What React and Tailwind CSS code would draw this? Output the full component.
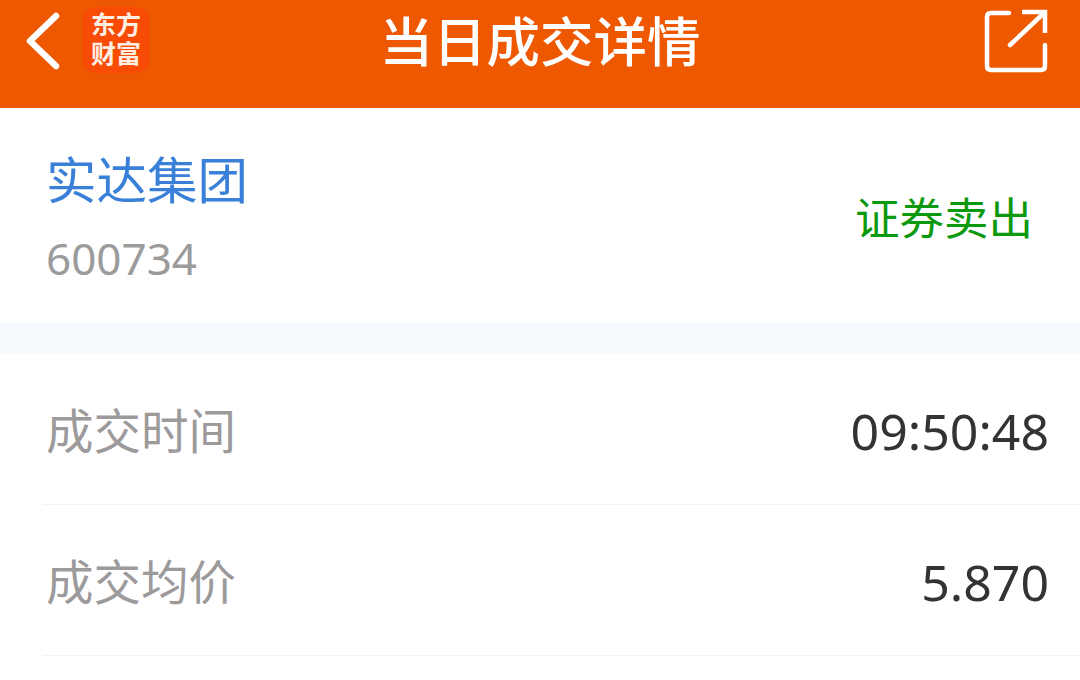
const rows = [
  { label: '成交时间', value: '09:50:48' },
  { label: '成交均价', value: '5.870' },
];

const App = () => {
  return (
    <div className="w-[1080px] h-[680px] overflow-hidden bg-white font-['Noto_Sans','Noto_Sans_CJK_SC',sans-serif]">
      <header className="h-[108px] bg-[#ee5800] flex items-start relative text-white">
        <svg width="40" height="64" viewBox="0 0 40 64" fill="none" className="ml-[23px] mt-[9px]">
          <path d="M33 7 L7 32 L33 57" stroke="#fff" strokeWidth="6.5" strokeLinecap="round" strokeLinejoin="round" />
        </svg>
        <div className="ml-[20px] mt-[7px] w-[66px] h-[66px] rounded-[12px] bg-[#f84b05] flex flex-col items-center justify-center text-[25px] leading-[29px] font-bold text-[#ffeee2] font-['Roboto','Noto_Sans_CJK_SC',sans-serif]">
          <span>东方</span>
          <span>财富</span>
        </div>
        <h1 className="absolute left-0 right-0 top-[10px] text-center text-[53.5px] leading-[64px] font-medium">当日成交详情</h1>
        <svg width="66" height="76" viewBox="0 0 66 76" fill="none" className="absolute left-[983px] top-[6px]">
          <path d="M26 7 H8 Q4 7 4 11 V60 Q4 64 8 64 H58 Q62 64 62 60 V39" stroke="#fff" strokeWidth="4.5" strokeLinecap="round" />
          <path d="M39 6 H62 V27" stroke="#fff" strokeWidth="4.5" />
          <path d="M27 39 L61 7" stroke="#fff" strokeWidth="4.5" strokeLinecap="round" />
        </svg>
      </header>
      <section className="h-[215px] pl-[46px] pr-[47px] flex items-center justify-between">
        <div>
          <div className="text-[50.5px] leading-[60px] text-[#3a80d8] mt-[1px]">实达集团</div>
          <div className="text-[44px] leading-[48px] text-[#9b9b9b] mt-[24px]">600734</div>
        </div>
        <div className="text-[44.5px] leading-[52px] text-[#0d990d] mt-[5px]">证券卖出</div>
      </section>
      <div className="h-[30px] bg-[#f6f9fe]" />
      <div className="pt-[1px]">
        {rows.map(r => (
          <div key={r.label} className="ml-[43px] h-[151px] border-b border-[#f3f3f3] flex items-center justify-between pr-[31px] pt-[3px]">
            <span className="text-[47.5px] leading-[56px] text-[#9c9a9b] ml-[3px]">{r.label}</span>
            <span className="text-[50px] leading-[56px] text-[#333333]">{r.value}</span>
          </div>
        ))}
      </div>
    </div>
  );
};

export default App;
